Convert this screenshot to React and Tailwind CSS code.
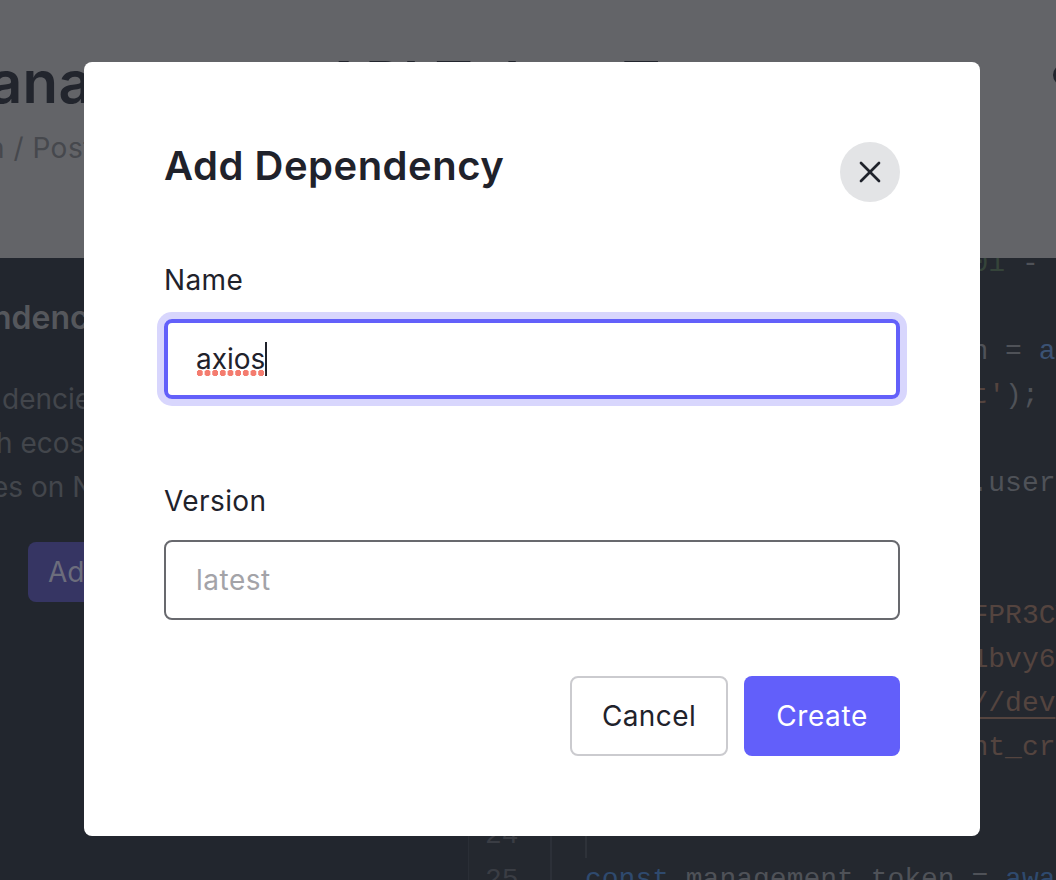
import React from 'react';
import { X } from 'lucide-react';

const sans = "font-['Inter','Noto_Sans',sans-serif]";
const pad = ' '.repeat(23);

const codeLines = [
  { n: 11, text: <><span className="text-[#35443a]">{pad}01</span> -</> },
  { n: 12, text: '' },
  { n: 13, text: <>{pad}n = <span className="text-[#3b5273]">a</span></> },
  { n: 14, text: <>{pad}<span className="text-[#54443f]">t'</span>);</> },
  { n: 15, text: '' },
  { n: 16, text: <>{pad}.user</> },
  { n: 17, text: '' },
  { n: 18, text: '' },
  { n: 19, text: <span className="text-[#54443f]">{pad}FPR3CV</span> },
  { n: 20, text: <span className="text-[#54443f]">{pad}1bvy6</span> },
  { n: 21, text: <span className="text-[#54443f] underline decoration-2 underline-offset-[6px]">{pad}//dev</span> },
  { n: 22, text: <span className="text-[#54443f]">{pad}nt_cr</span> },
  { n: 23, text: '' },
  { n: 24, text: <div className="h-[44px] border-l-2 border-[#2e3239]" /> },
  { n: 25, text: <><span className="text-[#2f4a6e]">const</span> management_token = <span className="text-[#2f4a6e]">awa</span></> },
];

function Field({ label, className, children }) {
  return (
    <div className={className}>
      <label className="block text-[28px] leading-[32px] tracking-[0.4px] text-[#1f222b]">{label}</label>
      {children}
    </div>
  );
}

export default function App() {
  return (
    <div className={`relative h-[880px] w-[1056px] overflow-hidden bg-[#22262e] ${sans}`}>
      {/* page behind the dialog */}
      <header className="h-[258px] overflow-hidden bg-[#636468] pt-[46px]">
        <div className="-ml-[65px] flex items-center">
          <h1 className="w-[1118px] shrink-0 whitespace-nowrap text-[58px] font-semibold leading-[72px] tracking-[0.4px] text-[#22252d]">
            Management API Token Test
          </h1>
          <span className="-mt-[14px] h-[22px] w-[22px] shrink-0 rounded-full bg-[#22252d]" />
        </div>
        <p className="-ml-[12px] mt-[12px] whitespace-nowrap text-[28px] leading-[36px] tracking-[0.5px] text-[#46484d]">
          n / Post
        </p>
      </header>
      <main className="flex h-[622px]">
        <section className="w-[468px] shrink-0 overflow-hidden pt-[40px]">
          <h2 className="-ml-[8px] whitespace-nowrap text-[32px] font-semibold leading-[40px] text-[#55575c]">
            ndencies
          </h2>
          <div className="mt-[39px] text-[28px] leading-[44px] text-[#43464c]">
            <p className="ml-[2px] whitespace-nowrap">dencies</p>
            <p className="-ml-[4px] whitespace-nowrap">h ecosystem</p>
            <p className="-ml-[8px] whitespace-nowrap">es on NPM</p>
          </div>
          <button className="ml-[28px] mt-[33px] h-[60px] rounded-lg bg-[#363563] px-[20px] text-[28px] text-[#6c6d7c]">
            Add Dependency
          </button>
        </section>
        <section className="flex min-w-0 flex-1 overflow-hidden border-l border-[#2a2e36] bg-[#24282f] font-['Liberation_Mono',monospace] text-[28px] leading-[44px] text-[#4f5258]">
          <div className="-mt-[16px] w-[83px] shrink-0 border-r-2 border-[#2c3038] pl-[16px] text-[#3a3d44]">
            {codeLines.map((l) => (
              <div key={l.n} className="h-[44px]">{l.n}</div>
            ))}
          </div>
          <div className="-mt-[16px] whitespace-pre pl-[33px]">
            {codeLines.map((l) => (
              <div key={l.n} className="h-[44px]">{l.text}</div>
            ))}
          </div>
        </section>
      </main>

      {/* dialog */}
      <div className="absolute left-[84px] top-[62px] h-[774px] w-[896px] rounded-lg bg-white px-[80px] pt-[80px]">
        <div className="flex items-start justify-between">
          <h2 className="text-[40px] font-semibold leading-[48px] tracking-[0.5px] text-[#1f222b]">Add Dependency</h2>
          <button className="flex h-[60px] w-[60px] items-center justify-center rounded-full bg-[#e3e4e6] text-[#1f222b]">
            <X size={36} strokeWidth={1.8} />
          </button>
        </div>

        <Field label="Name" className="mt-[62px]">
          <div className="mt-[23px] flex h-[80px] items-center rounded-lg border-4 border-[#6360fa] px-[28px] ring-[7px] ring-[#d8d6fd]">
            <span className="relative text-[28px] leading-[36px] text-[#1f222b]">
              axios
              <span className="absolute bottom-[1px] left-0 h-[6px] w-[70px] bg-[radial-gradient(circle,#f47c6f_3px,transparent_3px)] bg-[length:7.67px_6px]" />
            </span>
            <span className="h-[34px] w-[2px] bg-[#1f222b]" />
          </div>
        </Field>

        <Field label="Version" className="mt-[86px]">
          <input
            readOnly
            placeholder="latest"
            className="mt-[23px] block h-[80px] w-full rounded-lg border-2 border-[#68696e] bg-white px-[30px] text-[28px] tracking-[0.5px] text-[#1f222b] outline-none placeholder:text-[#a3a3a8]"
          />
        </Field>

        <div className="mt-[56px] flex justify-end gap-[16px]">
          <button className="h-[80px] w-[158px] rounded-lg border-2 border-[#cbcbcf] bg-white text-[28px] tracking-[0.4px] text-[#1f222b]">
            Cancel
          </button>
          <button className="h-[80px] w-[156px] rounded-lg bg-[#625ffa] text-[28px] tracking-[0.6px] text-white">
            Create
          </button>
        </div>
      </div>
    </div>
  );
}
